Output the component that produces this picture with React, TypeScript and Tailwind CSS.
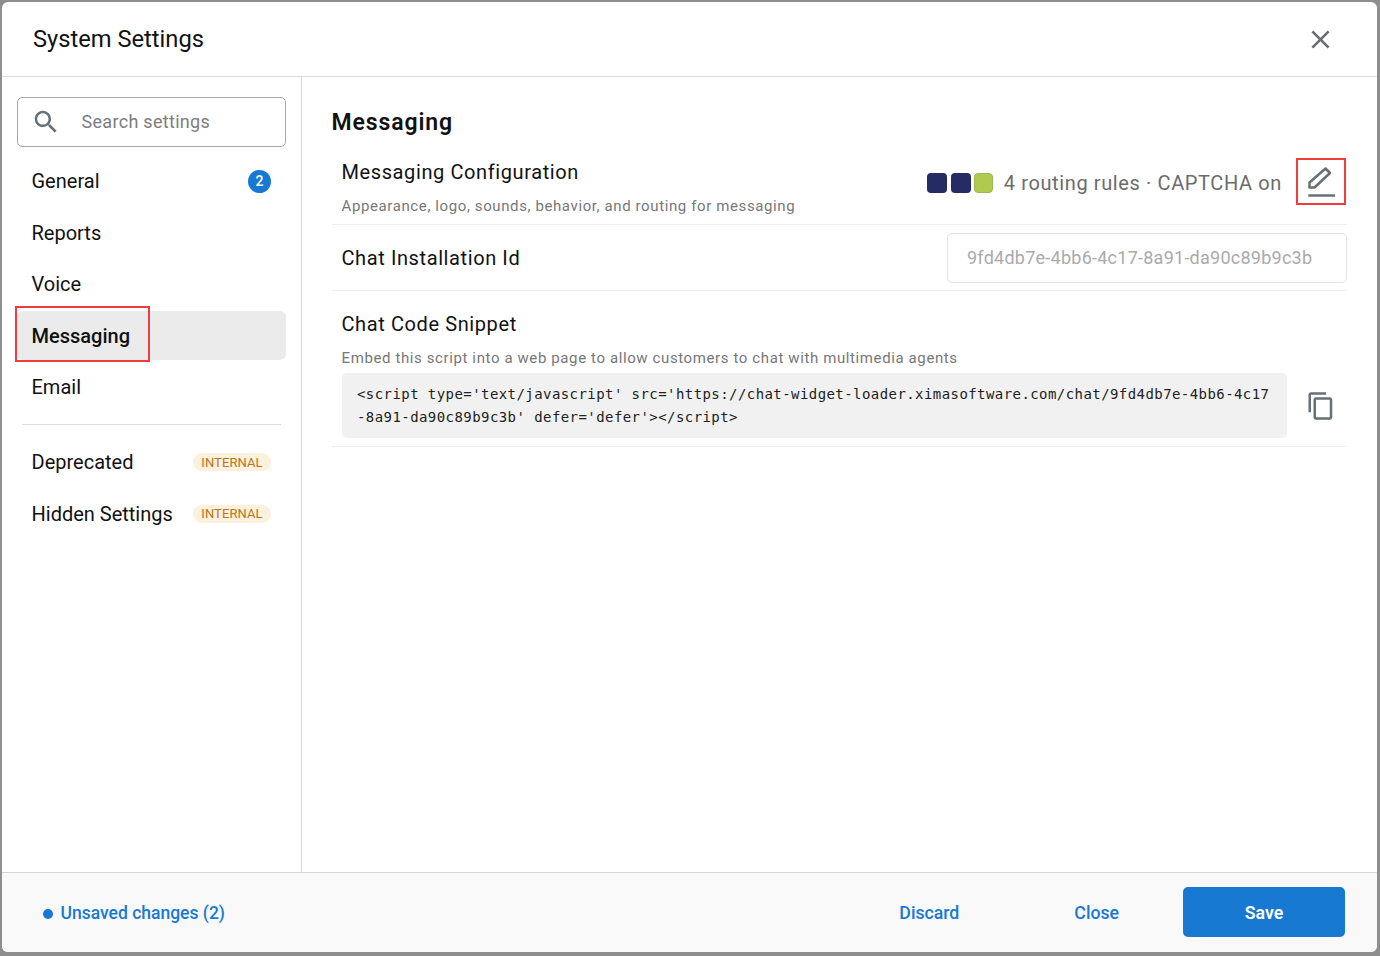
import React from 'react';

const navTop = [
  { label: 'General', badge: '2' },
  { label: 'Reports' },
  { label: 'Voice' },
  { label: 'Messaging', active: true },
  { label: 'Email' },
];

const InternalTag = ({ className = '' }: { className?: string }) => (
  <span
    className={`flex h-[18px] w-[78px] items-center justify-center rounded-full bg-[#fdf0dc] text-[13px] tracking-[0.1px] text-[#b8761a] ${className}`}
  >
    INTERNAL
  </span>
);

const NavItem = ({ label, badge, active }: { label: string; badge?: string; active?: boolean }) => (
  <div
    className={`relative flex items-center justify-between rounded-[6px] pl-[14.5px] pr-[15px] text-[20px] text-[#111] ${
      active ? 'mb-[0.5px] h-[49px] bg-[#ebebeb] font-medium' : 'h-[49.5px]'
    }`}
  >
    <span>{label}</span>
    {badge && (
      <span className="flex h-[23px] w-[23px] items-center justify-center rounded-full bg-[#1779d2] text-[14px] font-medium text-white">
        {badge}
      </span>
    )}
    {active && <span className="absolute left-[-2px] top-[-5px] h-[56px] w-[135px] border-2 border-[#f33b3b]" />}
  </div>
);

export default function App() {
  return (
    <div className="h-[956px] w-[1380px] overflow-hidden bg-[#8e8e8e] p-[2px] font-['Roboto',sans-serif]">
      <div className="flex h-[950px] w-[1375px] flex-col overflow-hidden rounded-[6px] bg-white">
        <header className="flex h-[75px] shrink-0 items-center justify-between border-b border-[#d9d9d9] pl-[31px] pr-[41.5px]">
          <h1 className="pt-[2px] text-[23.7px] text-[#111]">System Settings</h1>
          <svg width="31" height="31" viewBox="0 0 24 24" fill="#667076">
            <path d="M19 6.41 17.59 5 12 10.59 6.41 5 5 6.41 10.59 12 5 17.59 6.41 19 12 13.41 17.59 19 19 17.59 13.41 12z" />
          </svg>
        </header>

        <div className="flex min-h-0 flex-1">
          <aside className="w-[300px] shrink-0 border-r border-[#d9d9d9] pl-[15px] pr-[15px] pt-[20px]">
            <div className="flex h-[50px] items-center rounded-[5px] border border-[#a9a9a9] pl-[14px]">
              <svg width="30" height="30" viewBox="0 0 24 24" fill="#667076" className="ml-[-1px]">
                <path d="M15.5 14h-.79l-.28-.27C15.41 12.59 16 11.11 16 9.5 16 5.91 13.09 3 9.5 3S3 5.91 3 9.5 5.91 16 9.5 16c1.61 0 3.09-.59 4.23-1.57l.27.28v.79l5 4.99L20.49 19l-4.99-5zm-6 0C7.01 14 5 11.99 5 9.5S7.01 5 9.5 5 14 7.01 14 9.5 11.99 14 9.5 14z" />
              </svg>
              <span className="ml-[20.5px] pb-[2px] text-[18px] tracking-[0.3px] text-[#7d7d7d]">Search settings</span>
            </div>

            <nav className="mt-[9.5px] flex flex-col gap-[2px]">
              {navTop.map((item) => (
                <NavItem key={item.label} {...item} />
              ))}
            </nav>

            <div className="mx-[5px] mt-[12.25px] border-t border-[#dcdcdc]" />

            <div className="mt-[12px] flex flex-col gap-[3px]">
              <div className="flex h-[49px] items-center justify-between pl-[14.5px] pr-[15px] text-[20px] text-[#111]">
                <span>Deprecated</span>
                <InternalTag className="pt-[2px]" />
              </div>
              <div className="flex h-[49px] items-center justify-between pl-[14.5px] pr-[15px] text-[20px] text-[#111]">
                <span>Hidden Settings</span>
                <InternalTag />
              </div>
            </div>
          </aside>

          <main className="min-w-0 flex-1 pl-[30px] pr-[30px] pt-[30px]">
            <h2 className="ml-[-0.5px] text-[23px] font-semibold leading-[32px] tracking-[0.9px] text-[#111]">Messaging</h2>

            <section className="mt-[9px] flex h-[77px] items-start justify-between border-b border-[#eeeeee] pl-[10px] pr-[1px]">
              <div className="ml-[-0.5px]">
                <div className="mt-[12px] text-[20px] leading-[24px] tracking-[0.6px] text-[#111]">Messaging Configuration</div>
                <div className="mt-[12px] text-[15px] leading-[20px] tracking-[0.61px] text-[#777]">
                  Appearance, logo, sounds, behavior, and routing for messaging
                </div>
              </div>
              <div className="mt-[10px] flex items-center">
                <div className="mt-[2px] flex items-center">
                  <span className="h-5 w-5 rounded-[4px] bg-[#252b63]" />
                  <span className="ml-1 h-5 w-5 rounded-[4px] bg-[#252b63]" />
                  <span className="ml-[3px] h-5 w-[19px] rounded-[4px] border border-[#9db84c] bg-[#aecb50]" />
                  <span className="ml-[10.5px] text-[20px] tracking-[0.62px] text-[#6b6b6b]">4 routing rules · CAPTCHA on</span>
                </div>
                <button className="ml-[14px] flex h-[47px] w-[50px] items-center justify-center border-2 border-[#f33b3b]">
                  <svg width="28" height="31" viewBox="0 0 28 31" fill="none" stroke="#667076" strokeWidth="2.5">
                    <path d="M2.5 21.5v-5L18.5 2.5 23 7 7.5 21.5z" strokeLinejoin="round" />
                    <path d="M1.3 29.6H28" strokeWidth="2.5" />
                  </svg>
                </button>
              </div>
            </section>

            <section className="flex h-[66px] items-center justify-between border-b border-[#eeeeee] pl-[10px]">
              <div className="ml-[-0.5px] text-[20px] tracking-[0.6px] text-[#111]">Chat Installation Id</div>
              <div className="flex h-[50px] w-[400px] items-center rounded-[5px] border border-[#e3e3e3] pl-[19px] text-[18px] tracking-[0.25px] text-[#aaaaaa]">
                9fd4db7e-4bb6-4c17-8a91-da90c89b9c3b
              </div>
            </section>

            <section className="h-[156px] border-b border-[#eeeeee] pl-[10px] pt-[21px]">
              <div className="ml-[-0.5px] text-[20px] leading-[24px] tracking-[0.6px] text-[#111]">Chat Code Snippet</div>
              <div className="ml-[-0.5px] mt-[12px] text-[15px] leading-[20px] tracking-[0.61px] text-[#777]">
                Embed this script into a web page to allow customers to chat with multimedia agents
              </div>
              <div className="mt-[5px] flex items-center">
                <div className="h-[65px] w-[945px] shrink-0 rounded-[5px] bg-[#f1f1f1] px-[15px] py-[10px] font-['DejaVu_Sans_Mono',monospace] text-[14px] leading-[23px] tracking-[0.43px] text-[#222] [word-break:break-all]">
                  {"<script type='text/javascript' src='https://chat-widget-loader.ximasoftware.com/chat/9fd4db7e-4bb6-4c17-8a91-da90c89b9c3b' defer='defer'></script>"}
                </div>
                <svg width="30" height="30" viewBox="0 0 24 24" fill="#667076" className="ml-[19px] shrink-0">
                  <path d="M16 1H4c-1.1 0-2 .9-2 2v14h2V3h12V1zm3 4H8c-1.1 0-2 .9-2 2v14c0 1.1.9 2 2 2h11c1.1 0 2-.9 2-2V7c0-1.1-.9-2-2-2zm0 16H8V7h11v14z" />
                </svg>
              </div>
            </section>
          </main>
        </div>

        <footer className="flex h-[80px] shrink-0 items-center border-t border-[#d4d4d4] bg-[#f9f9f9] pl-[41px] pr-[32px]">
          <span className="mt-[3px] h-[10px] w-[10px] rounded-full bg-[#1779d2]" />
          <span className="ml-[7.5px] pt-[2px] text-[17.5px] font-medium text-[#1779d2]">Unsaved changes (2)</span>
          <button className="ml-auto pt-[2px] text-[17.7px] font-medium text-[#1779d2]">Discard</button>
          <button className="ml-[115px] pt-[2px] text-[17.7px] font-medium text-[#1779d2]">Close</button>
          <button className="mb-[2px] ml-[64px] h-[50px] w-[162px] rounded-[5px] bg-[#1779d2] pt-[4px] text-[17.7px] font-semibold text-white">
            Save
          </button>
        </footer>
      </div>
    </div>
  );
}
